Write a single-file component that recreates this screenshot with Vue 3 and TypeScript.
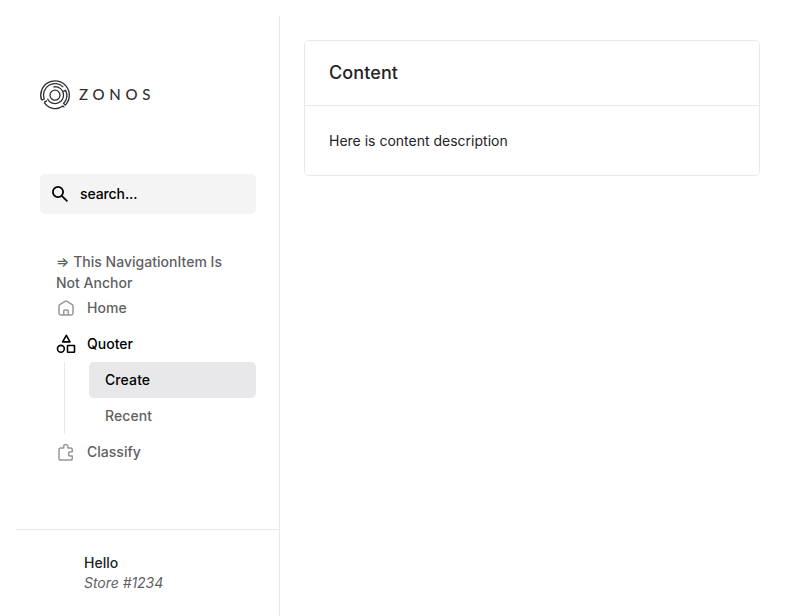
<script setup lang="ts">
import { ref } from 'vue'

interface SubItem {
  label: string
  active: boolean
}

const query = ref<string>('search...')
const subItems: SubItem[] = [
  { label: 'Create', active: true },
  { label: 'Recent', active: false },
]
</script>

<template>
  <div class="layout">
    <aside class="sidebar">
      <div class="logo">
        <svg class="logo-mark" width="32" height="32" viewBox="0 0 32 32" fill="none" stroke="currentColor" stroke-width="1.3">
          <circle cx="16" cy="16.2" r="5" />
          <path d="M2.6 21.1A14.3 14.3 0 1 1 26.4 26L24.6 24.4A11.6 11.6 0 0 0 26.6 11.4L24.2 12.4" />
          <path d="M2.6 21.1L5.2 20A11.5 11.5 0 0 1 24.3 8.1" />
          <path d="M5.2 23.4A13 13 0 0 0 24 27L25.4 28.4" />
          <path d="M5.2 23.4L8 21.6" />
          <path d="M14.4 8.2L16 7.6A8.5 8.5 0 1 1 8.4 19.8" />
        </svg>
        <span class="wordmark">ZONOS</span>
      </div>

      <label class="search">
        <svg width="20" height="20" viewBox="0 0 20 20" fill="none" stroke="currentColor" stroke-width="1.8">
          <circle cx="8" cy="8" r="5.1" />
          <path d="M11.8 11.8l5.6 5.6" />
        </svg>
        <span>{{ query }}</span>
      </label>

      <nav class="nav">
        <div class="plain">⇒ This NavigationItem Is Not Anchor</div>
        <a class="item">
          <svg width="20" height="20" viewBox="0 0 20 20" fill="none" stroke="#96969c" stroke-width="1.5" stroke-linejoin="round">
            <path d="M3 8.1Q3 7.2 3.8 6.7L9 3.3Q10 2.7 11 3.3L16.2 6.7Q17 7.2 17 8.1V15.3Q17 17 15.3 17H4.7Q3 17 3 15.3Z" />
            <path d="M7.7 17V13.3Q7.7 12 9 12H11Q12.3 12 12.3 13.3V17" />
          </svg>
          <span>Home</span>
        </a>
        <a class="item current">
          <svg width="20" height="20" viewBox="0 0 20 20" fill="none" stroke="currentColor" stroke-width="1.6" stroke-linejoin="round">
            <path d="M10.3 1.4L14 7.9H6.6Z" />
            <circle cx="4.9" cy="14.8" r="3.4" />
            <rect x="11.5" y="11.5" width="7" height="6.7" rx=".5" />
          </svg>
          <span>Quoter</span>
        </a>
        <div class="children">
          <a v-for="s in subItems" :key="s.label" class="child" :class="{ active: s.active }">{{ s.label }}</a>
        </div>
        <a class="item">
          <svg width="20" height="20" viewBox="0 0 20 20" fill="none" stroke="#96969c" stroke-width="1.5" stroke-linejoin="round">
            <path d="M4.8 6H7.7V4.5A2.1 2.1 0 0 1 11.9 4.5V6H14.5Q16.3 6 16.3 7.8V9.8H14.7A2.1 2.1 0 0 0 14.7 14H16.3V16.2Q16.3 18 14.5 18H4.8Q3 18 3 16.2V7.8Q3 6 4.8 6Z" />
          </svg>
          <span>Classify</span>
        </a>
      </nav>

      <footer class="account">
        <div class="name">Hello</div>
        <div class="store">Store #1234</div>
      </footer>
    </aside>

    <main class="main">
      <section class="card">
        <h2>Content</h2>
        <p>Here is content description</p>
      </section>
    </main>
  </div>
</template>

<style>
body {
  background: #fff;
}
</style>

<style scoped>
.layout {
  box-sizing: border-box;
  display: flex;
  height: 616px;
  padding: 16px 16px 0;
  overflow: hidden;
  font-family: Inter, 'Liberation Sans', sans-serif;
  font-size: 14px;
  color: #242426;
}
.sidebar {
  box-sizing: border-box;
  display: flex;
  flex-direction: column;
  width: 264px;
  flex: none;
  border-right: 1px solid #e8e8ea;
}
.logo {
  display: flex;
  align-items: center;
  height: 32px;
  margin: 63px 0 0 23px;
  color: #2f2f31;
}
.wordmark {
  margin-left: 8px;
  padding-bottom: 2px;
  font-family: Lato, sans-serif;
  font-size: 15px;
  font-weight: 500;
  line-height: 30px;
  letter-spacing: 4.7px;
}
.search {
  display: flex;
  align-items: center;
  gap: 10px;
  height: 40px;
  margin: 63px 23px 0 24px;
  padding-left: 10px;
  box-sizing: border-box;
  border-radius: 5px;
  background: #f4f4f4;
  color: #000;
  font-weight: 500;
  letter-spacing: -0.1px;
}
.search span,
.item span {
  padding-bottom: 2px;
}
.nav {
  margin: 37px 23px 0 24px;
  font-weight: 500;
  letter-spacing: 0.02px;
  color: #5f5f63;
}
.plain {
  padding: 0 16px;
  line-height: 21px;
}
.item {
  display: flex;
  align-items: center;
  gap: 11px;
  height: 36px;
  padding-left: 16px;
}
.plain + .item {
  margin-top: -3px;
}
.current {
  color: #000;
}
.children {
  margin-left: 24px;
  padding-left: 24px;
  border-left: 1px solid #e8e8ea;
}
.child {
  display: block;
  height: 36px;
  padding-left: 16px;
  line-height: 36px;
  letter-spacing: 0.1px;
  border-radius: 5px;
}
.child.active {
  background: #e8e8ea;
  color: #000;
}
.account {
  box-sizing: border-box;
  height: 87px;
  margin-top: auto;
  padding: 23px 0 0 68px;
  border-top: 1px solid #e8e8ea;
  line-height: 20px;
}
.name {
  font-weight: 500;
}
.store {
  font-style: italic;
  letter-spacing: -0.04px;
  color: #5f5f63;
}
.main {
  flex: 1;
  padding: 24px;
}
.card {
  border: 1px solid #e8e8ea;
  border-radius: 5px;
}
.card h2 {
  margin: 0;
  padding: 20px 24px;
  border-bottom: 1px solid #e8e8ea;
  font-size: 18px;
  font-weight: 500;
  line-height: 24px;
  letter-spacing: 0.1px;
}
.card p {
  margin: 0;
  padding: 24px;
  line-height: 21px;
}
</style>
